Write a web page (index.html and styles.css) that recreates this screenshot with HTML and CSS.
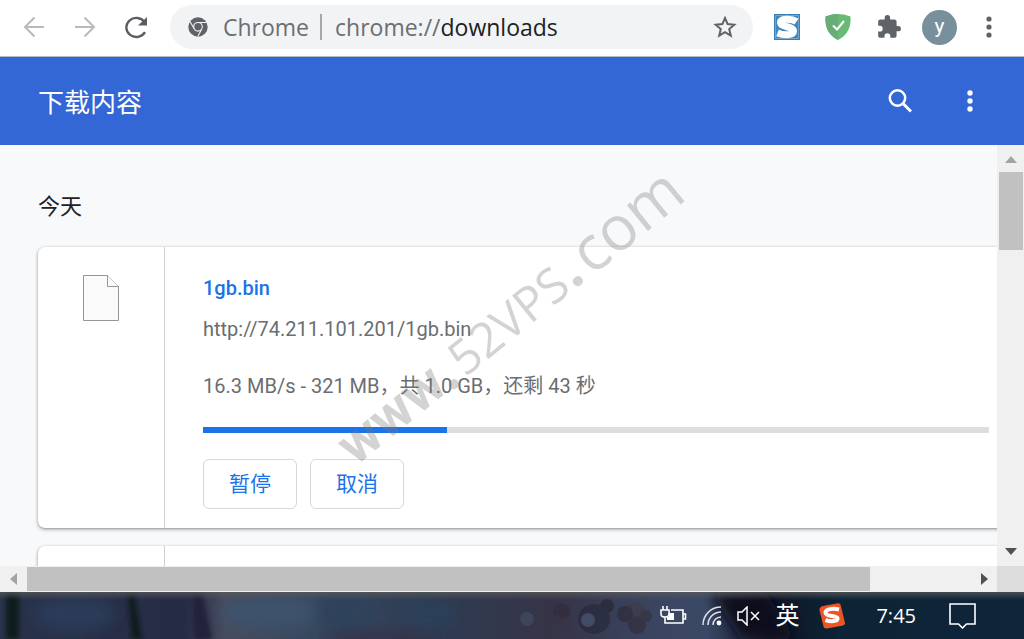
FILE: index.html
```html
<!DOCTYPE html>
<html lang="zh-CN">
<head>
<meta charset="utf-8">
<title>下载内容</title>
<link rel="stylesheet" href="styles.css">
</head>
<body>
<nav class="toolbar">
  <button class="tool back" aria-label="后退"><svg width="22" height="22" viewBox="0 0 22 22" fill="none" stroke="#bababc" stroke-width="2"><path d="M21 11H2M11.500 1.500L2 11l9.500 9.500"/></svg></button>
  <button class="tool forward" aria-label="前进"><svg width="22" height="22" viewBox="0 0 22 22" fill="none" stroke="#bababc" stroke-width="2"><path d="M1 11h19M10.500 1.500L20 11l-9.500 9.500"/></svg></button>
  <button class="tool reload" aria-label="重新加载"><svg width="24" height="24" viewBox="0 0 24 24"><path d="M20 17.200A10 9.500 0 1 1 19.500 7" fill="none" stroke="#5a5d61" stroke-width="2.300"/><path d="M22 2v8.500h-9z" fill="#5a5d61"/></svg></button>
  <div class="omnibox">
    <svg width="20" height="20" viewBox="0 0 20 20"><circle cx="10" cy="10" r="9.700" fill="#5f6368"/><g fill="none" stroke="#f1f3f4" stroke-width="1.100"><circle cx="10" cy="9.800" r="4.300"/><path d="M10 5.500h8.500M6.200 11.800L2 4.500M13.700 12L9.800 19.500"/></g></svg>
    <span class="site">Chrome</span>
    <span class="rule"></span>
    <span class="url">chrome://<b>downloads</b></span>
    <button class="star" aria-label="收藏"><svg width="24" height="24" viewBox="0 0 24 24" fill="none" stroke="#5f6368" stroke-width="2"><path d="M12 3l2.600 6.100 6.700.6-5.100 4.400 1.600 6.500-5.800-3.500-5.800 3.500 1.600-6.500-5.100-4.400 6.700-.6z"/></svg></button>
  </div>
  <div class="extensions">
    <button aria-label="S"><svg width="26" height="26" viewBox="0 0 26 26"><path d="M0 0h26v26H0z" fill="#3a7db2"/><path d="M1.500 1.500h23v23h-23z" fill="#3f88bf" stroke="#a9cae2" stroke-width=".5"/><path d="M22.500 7.500C17 4 6.500 4.500 6.500 8.500c0 5 13 3.500 13 8.500 0 4-8 5-16 2" fill="none" stroke="#fff" stroke-width="7"/></svg></button>
    <button aria-label="防护"><svg width="26" height="26" viewBox="0 0 26 26"><path d="M13 0c4 0 8 .8 12.500 2.500C26 12 24 20 13 26 2 20 0 12 .5 2.500 5 .8 9 0 13 0z" fill="#68bb75"/><path d="M13 0v26C2 20 0 12 .5 2.500 5 .8 9 0 13 0z" fill="#67ad75"/><path d="M8 11.500l4 4 7-8.500" fill="none" stroke="#fff" stroke-width="2"/></svg></button>
    <button aria-label="扩展程序"><svg width="26" height="26" viewBox="0 0 24 24"><path fill="#5f6368" d="M20.500 11H19V7c0-1.100-.9-2-2-2h-4V3.500a2.500 2.500 0 0 0-5 0V5H4a2 2 0 0 0-2 2v3.800h1.500a2.700 2.700 0 0 1 0 5.400H2V20c0 1.100.9 2 2 2h3.800v-1.500a2.700 2.700 0 0 1 5.400 0V22H17c1.100 0 2-.9 2-2v-4h1.500a2.500 2.500 0 0 0 0-5z"/></svg></button>
    <button class="avatar" aria-label="个人资料">y</button>
    <button class="more" aria-label="菜单"><svg width="10" height="22" viewBox="0 0 10 22" fill="#5f6368"><circle cx="5" cy="3" r="2.600"/><circle cx="5" cy="11" r="2.600"/><circle cx="5" cy="19" r="2.600"/></svg></button>
  </div>
</nav>
<header class="header">
  <h1>下载内容</h1>
  <button aria-label="搜索"><svg width="24" height="24" viewBox="0 0 24 24" fill="none" stroke="#fff"><circle cx="9.500" cy="9" r="7.700" stroke-width="2.500"/><path d="M15 14.500l8 8" stroke-width="3"/></svg></button>
  <button aria-label="更多操作"><svg width="10" height="22" viewBox="0 0 10 22" fill="#fff"><circle cx="5" cy="3" r="2.700"/><circle cx="5" cy="11" r="2.700"/><circle cx="5" cy="19" r="2.700"/></svg></button>
</header>
<div class="page">
  <main class="content">
    <h2>今天</h2>
    <article class="card">
      <div class="file"><svg width="36" height="47" viewBox="0 0 36 47" fill="#fafafa" stroke="#969696"><path d="M.5.500h24l11 11v34H.5z"/><path d="M24.500.500v11h11"/></svg></div>
      <div class="details">
        <a class="name" href="#">1gb.bin</a>
        <a class="source" href="#">http://74.211.101.201/1gb.bin</a>
        <p>16.3 MB/s - 321 MB，共 1.0 GB，还剩 43 秒</p>
        <div class="progress" role="progressbar" aria-valuenow="31"><div style="width:31%"></div></div>
        <div class="actions"><button>暂停</button><button>取消</button></div>
      </div>
    </article>
    <article class="card"><div class="file"></div><div class="details"></div></article>
  </main>
  <div class="scroll-y"><span class="up"></span><span class="thumb"></span><span class="down"></span></div>
</div>
<div class="scroll-x"><span class="left"></span><span class="thumb"></span><span class="track"></span><span class="right"></span><span class="corner"></span></div>
<footer class="taskbar">
  <svg class="wallpaper" viewBox="0 0 1024 47" preserveAspectRatio="none">
    <defs>
      <filter id="soft" x="-20%" y="-50%" width="140%" height="200%"><feGaussianBlur stdDeviation="7"/></filter>
      <filter id="edge" x="-50%" y="-20%" width="200%" height="140%"><feGaussianBlur stdDeviation="2"/></filter>
      <linearGradient id="base"><stop offset="0" stop-color="#29334a"/><stop offset=".18" stop-color="#262b45"/><stop offset=".22" stop-color="#474c5f"/><stop offset=".3" stop-color="#37495f"/><stop offset=".43" stop-color="#2e3b51"/><stop offset=".54" stop-color="#363447"/><stop offset=".64" stop-color="#3a4561"/><stop offset=".69" stop-color="#3a4866"/><stop offset=".75" stop-color="#101425"/><stop offset=".82" stop-color="#0c2436"/><stop offset="1" stop-color="#10243a"/></linearGradient>
      <linearGradient id="top" x2="0" y2="1"><stop offset="0" stop-color="#5a5a5a" stop-opacity=".75"/><stop offset="1" stop-color="#5a5a5a" stop-opacity="0"/></linearGradient>
    </defs>
    <path d="M0 0h1024v47H0z" fill="url(#base)"/>
    <g filter="url(#soft)"><ellipse cx="75" cy="22" rx="40" ry="18" fill="#2b3a58"/><ellipse cx="270" cy="20" rx="48" ry="15" fill="#3c536e"/><ellipse cx="345" cy="20" rx="30" ry="18" fill="#2e435b"/><ellipse cx="430" cy="22" rx="25" ry="12" fill="#2c405b"/><ellipse cx="380" cy="46" rx="60" ry="7" fill="#353049"/><path d="M711 0h55l30 47h-55z" fill="#0b0e1c"/></g>
    <g filter="url(#edge)"><path d="M6 0h13v47H6zM128 0h6l8 47h-10z" fill="#111a1e"/><path d="M192 0h10l10 47h-18z" fill="#20233b"/></g>
    <g opacity=".6"><circle cx="527" cy="27" r="7" fill="#435069"/><circle cx="562" cy="20" r="9" fill="#302b3c"/><circle cx="555" cy="31" r="8" fill="#393443"/><circle cx="567" cy="31" r="6" fill="#3a3545"/><circle cx="607" cy="14" r="7" fill="#25242d"/><ellipse cx="594" cy="27" rx="16" ry="15" fill="#25263a"/><circle cx="588" cy="28" r="7" fill="#485872"/><circle cx="635" cy="20" r="10" fill="#423a42"/><circle cx="625" cy="22" r="8" fill="#2b2935"/><circle cx="637" cy="33" r="9" fill="#302b37"/><circle cx="646" cy="24" r="6" fill="#35303a"/></g>
    <path d="M0 0h1024v8H0z" fill="url(#top)"/>
  </svg>
  <div class="tray">
    <svg width="27" height="20" viewBox="0 0 27 20" fill="none" stroke="#fff" stroke-width="1.600"><path d="M3 0v4M7 0v4M1 4h8v4c0 2-1.500 3-4 3s-4-1-4-3zM5 11v6h18V4H11M23 8h2.500v5H23"/><path d="M9 7h5v7H7v-3h2z" fill="#fff" stroke="none"/></svg>
    <svg width="20" height="20" viewBox="0 0 20 20" fill="none" stroke="#fff" stroke-width="1.500"><path d="M1 19A18 18 0 0 1 19 1M6 19A13 13 0 0 1 19 6M11 19a8 8 0 0 1 8-8" opacity=".85"/><circle cx="17" cy="17" r="2.400" fill="#fff" stroke="none"/></svg>
    <svg width="23" height="20" viewBox="0 0 23 20" fill="none" stroke="#fff" stroke-width="1.500"><path d="M1 6h4l5-5v18l-5-5H1zM14 6l8 8M22 6l-8 8"/></svg>
    <span class="ime">英</span>
    <svg class="sogou" width="26" height="26" viewBox="0 0 26 26"><path d="M4 3l15-2.700q2-.3 2.600 1.500L26 20q.3 2-2 2.500L8 25.500q-3 .5-3.500-2L.5 7Q.3 4 4 3z" fill="#ed5624"/><path d="M20 6.500C14 5 6.500 6 6.500 9.800c0 4 12 2.600 12 5.600 0 3-6 3.600-12 1.700" fill="none" stroke="#fff" stroke-width="4"/></svg>
    <time>7:45</time>
    <svg width="27" height="27" viewBox="0 0 27 27" fill="none" stroke="#fff" stroke-width="1.600"><path d="M1 2h25v20h-8.500l-4 4-4-4H1z"/></svg>
  </div>
</footer>
<svg class="watermark" width="480" height="440" viewBox="0 0 480 440" aria-hidden="true">
  <g transform="translate(101 382) rotate(-39)">
    <text class="mark-www" x="-7" y="0">www</text>
    <text class="mark-dot" x="113" y="2">.</text>
    <text class="mark-num" x="134" y="0">52VPS</text>
    <text class="mark-dot" x="274" y="0">.</text>
    <text class="mark-com" x="296" y="1">com</text>
  </g>
</svg>
</body>
</html>
```
FILE: styles.css
```css
* { box-sizing: border-box; }
body { margin: 0; height: 100vh; display: flex; flex-direction: column; overflow: hidden; position: relative; background: #f8f9fb; color: #202124; font-family: Roboto, "Noto Sans CJK SC", sans-serif; }
button { border: 0; padding: 0; background: none; font: inherit; color: inherit; display: flex; align-items: center; justify-content: center; }
svg { display: block; flex: none; }
h1, h2, p { margin: 0; font-weight: 400; }
a { text-decoration: none; }

.toolbar { flex: none; height: 57px; padding: 0 30px 2px 23px; display: flex; align-items: center; background: #fff; border-bottom: 1px solid #b6bac4; }
.tool { flex: none; margin-right: 29px; }
.tool.reload { margin-right: 21px; }
.omnibox { flex: 1; height: 44px; padding: 0 16px 0 18px; border-radius: 22px; background: #f1f3f4; display: flex; align-items: center; font: 23px/32px "Open Sans", sans-serif; color: #6b6e72; }
.site { margin-left: 15px; }
.rule { width: 2px; height: 26px; margin: 0 13px 0 11px; background: #a4a7ab; }
.url b { font-weight: 400; color: #202124; }
.star { margin-left: auto; }
.extensions { flex: none; margin-left: 21px; display: flex; align-items: center; gap: 25px; }
.extensions .avatar { width: 35px; height: 35px; margin-left: -5px; padding-bottom: 3px; border-radius: 50%; background: #78909c; color: #fff; font-size: 21px; line-height: 30px; }
.extensions .more { margin-left: 2px; }

.header { flex: none; height: 88px; padding: 0 49px 0 38px; display: flex; align-items: center; gap: 53px; background: #3367d6; color: #fff; }
.header h1 { margin-right: auto; padding-top: 4px; font-size: 26px; line-height: 36px; }

.page { flex: 1; min-height: 0; display: flex; }
.content { flex: 1; min-width: 0; padding: 44px 0 0 38px; overflow: hidden; }
.content h2 { font-size: 22px; line-height: 36px; margin-bottom: 22px; }
.card { display: flex; min-height: 281px; margin: 0 -40px 18px 0; padding-right: 48px; border-radius: 7px; background: #fff; box-shadow: 0 1px 3px #3c404380, 0 2px 5px #3c404322; }
.file { flex: none; width: 127px; padding: 28px 0 0 45px; border-right: 1px solid #cfd0d2; }
.details { flex: 1; padding: 26px 0 18px 38px; display: flex; flex-direction: column; align-items: flex-start; font-size: 20px; line-height: 30px; color: #6a6d71; }
.name { color: #1a73e8; font-weight: 500; margin-bottom: 11px; }
.source { color: inherit; margin-bottom: 27px; }
.details p { margin-bottom: 26px; }
.progress { width: 100%; height: 6px; background: #dedede; }
.progress div { height: 6px; background: #1a73e8; }
.actions { display: flex; gap: 13px; margin-top: 26px; }
.actions button { width: 94px; height: 50px; border: 1px solid #d6d8de; border-radius: 6px; color: #1a73e8; font-size: 21px; }

.scroll-y { flex: none; width: 27px; padding: 11px 1px 11px 2px; display: flex; flex-direction: column; align-items: center; background: #f0f0f0; }
.scroll-y .thumb { width: 100%; height: 78px; margin-top: 9px; background: #c1c1c1; }
.up, .down { border: 6px solid transparent; border-top: 0; border-bottom: 7px solid #a3a3a3; }
.down { margin-top: auto; border-top: 7px solid #505050; border-bottom: 0; }
.scroll-x { flex: none; height: 26px; padding-left: 10px; display: flex; align-items: center; background: #f0f0f0; }
.scroll-x .thumb { flex: 843; height: 24px; margin-left: 10px; background: #c1c1c1; }
.scroll-x .track { flex: 111; }
.left, .right { border: 6px solid transparent; border-left: 0; border-right: 7px solid #a3a3a3; }
.right { border-left: 7px solid #505050; border-right: 0; }
.corner { width: 27px; height: 26px; margin-left: 9px; background: #dcdcdc; }

.taskbar { flex: none; height: 47px; position: relative; color: #fff; overflow: hidden; }
.wallpaper { position: absolute; inset: 0; width: 100%; height: 100%; }
.tray { position: relative; height: 100%; padding-right: 48px; display: flex; align-items: center; justify-content: flex-end; gap: 15px; }
.ime { font-size: 24px; line-height: 32px; }
.tray .sogou { margin-left: 5px; }
.tray time { margin: 0 18px 0 16px; font: 20px/28px "Open Sans", sans-serif; }

.watermark { position: absolute; left: 260px; top: 80px; overflow: visible; opacity: .33; fill: #7c7c7c; pointer-events: none; }
.mark-www { font: 700 55px Roboto, sans-serif; }
.mark-dot { font: 700 58px "Open Sans", sans-serif; }
.mark-num { font: 48px "Open Sans", sans-serif; }
.mark-com { font: 62px "Open Sans", sans-serif; }
```
